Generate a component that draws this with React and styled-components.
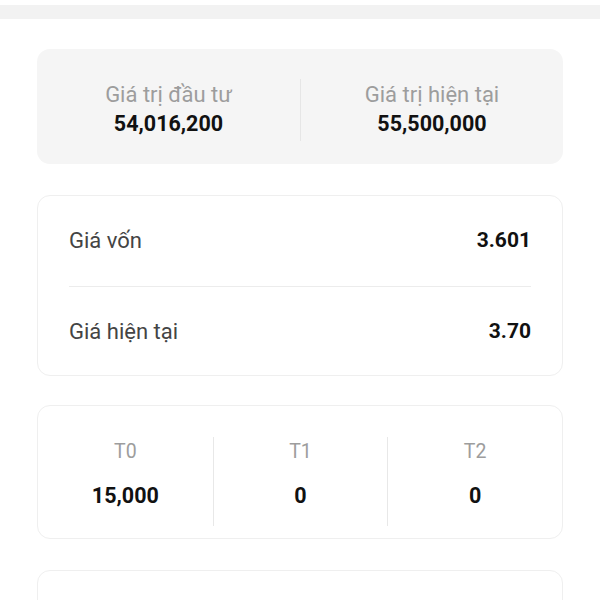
import styled, { createGlobalStyle } from 'styled-components'

const Global = createGlobalStyle`
  body{margin:0;background:#fff;font-family:Roboto,"Noto Sans",sans-serif;}
`

const Page = styled.div`
  display:flex;flex-direction:column;padding-top:5px;
`
const TopStrip = styled.div`
  height:14px;background:#f2f2f2;margin-bottom:30px;
`
const Card = styled.div`
  margin:0 37px 31px;border-radius:13px;box-sizing:border-box;
  background:${p => p.grey ? '#f5f5f5' : '#fff'};
  border:${p => p.grey ? '0' : '1.5px solid #efefef'};
`
const Split = styled(Card)`
  height:115px;display:grid;grid-template-columns:1fr 1fr;align-items:center;
  padding-top:7px;
`
const SplitCell = styled.div`
  display:flex;flex-direction:column;align-items:center;
  height:62px;justify-content:center;
  border-left:${p => p.first ? '0' : '1px solid #e6e6e6'};
`
const Label = styled.div`
  font-size:${p => p.size || 19.5}px;line-height:24px;color:#9d9d9d;
`
const Value = styled.div`
  font-size:21.5px;line-height:28px;font-weight:700;color:#111;
  margin-top:${p => p.gap || 3}px;
`
const RowsCard = styled(Card)`
  padding:0 31px;
`
const Row = styled.div`
  height:88px;display:flex;align-items:center;justify-content:space-between;
  border-top:${p => p.first ? '0' : '1.5px solid #ececec'};
  padding-bottom:${p => p.first ? '2px' : '0'};
`
const RowLabel = styled.span`
  font-size:22px;color:#444;
`
const RowValue = styled.span`
  font-size:21px;font-weight:700;color:#111;
`
const Triple = styled(Card)`
  height:134px;display:grid;grid-template-columns:repeat(3,1fr);
  padding:31px 0 12px;margin-top:-2px;
`
const TripleCell = styled.div`
  display:flex;flex-direction:column;align-items:center;
  border-left:${p => p.first ? '0' : '1px solid #e8e8e8'};
  padding-top:3px;
`
const Stub = styled(Card)`
  height:60px;margin-bottom:0;
`

export default function App(){
  const summary = [
    {label:'Giá trị đầu tư', value:'54,016,200'},
    {label:'Giá trị hiện tại', value:'55,500,000'},
  ]
  const prices = [
    {label:'Giá vốn', value:'3.601'},
    {label:'Giá hiện tại', value:'3.70'},
  ]
  const sessions = [
    {label:'T0', value:'15,000'},
    {label:'T1', value:'0'},
    {label:'T2', value:'0'},
  ]
  return(
    <>
      <Global/>
      <Page>
        <TopStrip/>
        <Split grey>
          {summary.map((s,i)=>(
            <SplitCell key={s.label} first={i===0}>
              <Label size={22}>{s.label}</Label>
              <Value>{s.value}</Value>
            </SplitCell>
          ))}
        </Split>
        <RowsCard>
          {prices.map((p,i)=>(
            <Row key={p.label} first={i===0}>
              <RowLabel>{p.label}</RowLabel>
              <RowValue>{p.value}</RowValue>
            </Row>
          ))}
        </RowsCard>
        <Triple>
          {sessions.map((s,i)=>(
            <TripleCell key={s.label} first={i===0}>
              <Label>{s.label}</Label>
              <Value gap={18}>{s.value}</Value>
            </TripleCell>
          ))}
        </Triple>
        <Stub/>
      </Page>
    </>
  )
}
